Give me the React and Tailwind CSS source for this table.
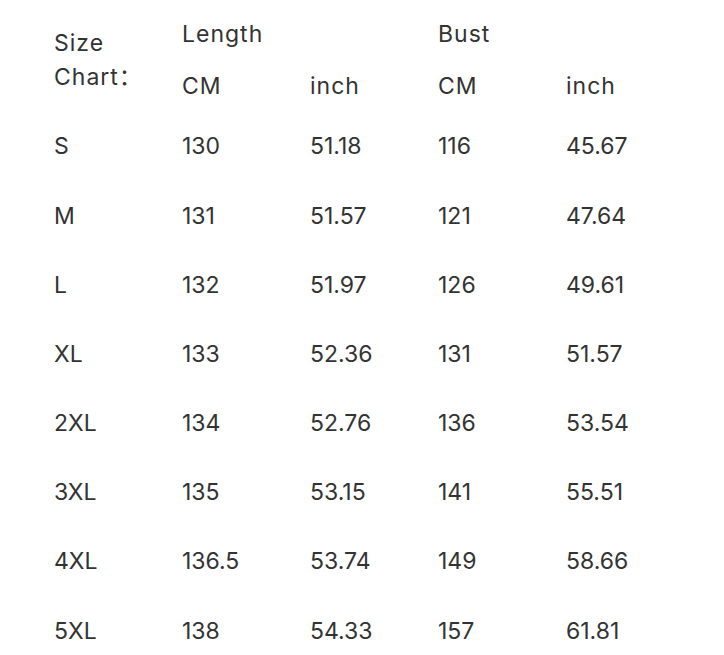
import React from "react";

const rows = [
    ["S", "130", "51.18", "116", "45.67"],
    ["M", "131", "51.57", "121", "47.64"],
    ["L", "132", "51.97", "126", "49.61"],
    ["XL", "133", "52.36", "131", "51.57"],
    ["2XL", "134", "52.76", "136", "53.54"],
    ["3XL", "135", "53.15", "141", "55.51"],
    ["4XL", "136.5", "53.74", "149", "58.66"],
    ["5XL", "138", "54.33", "157", "61.81"],
];

const App = () => {
    return (
        <div
            className="w-[724px] h-[655px] bg-white text-[#333333] text-[23px] pl-[54px] pt-[8px] overflow-hidden"
            style={{ fontFamily: 'Inter, "Noto Sans CJK SC", sans-serif' }}
        >
            <div className="grid grid-cols-[128px_128px_128px_128px_128px] grid-rows-[52px_52px] tracking-[1px]">
                <div className="row-span-2 flex flex-col justify-center leading-[34px]">
                    <span>Size</span>
                    <span>Chart：</span>
                </div>
                <div className="col-span-2 flex items-center">Length</div>
                <div className="col-span-2 flex items-center">Bust</div>
                <div className="flex items-center">CM</div>
                <div className="flex items-center">inch</div>
                <div className="flex items-center">CM</div>
                <div className="flex items-center">inch</div>
            </div>
            {rows.map((row) => (
                <div key={row[0]} className="grid grid-cols-[128px_128px_128px_128px_128px] h-[69.2px] items-center">
                    {row.map((cell, i) => (
                        <div key={i}>{cell}</div>
                    ))}
                </div>
            ))}
        </div>
    );
};

export default App;
